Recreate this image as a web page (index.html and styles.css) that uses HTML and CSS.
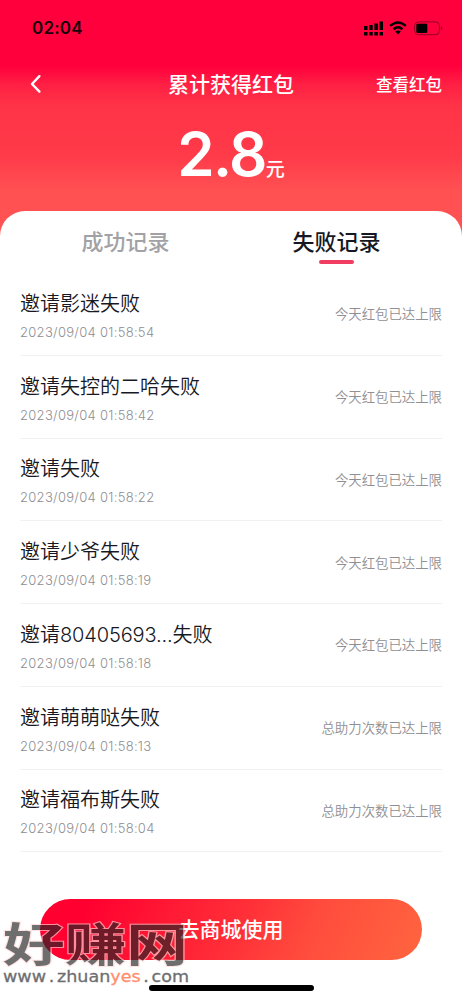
FILE: index.html
```html
<!DOCTYPE html>
<html lang="zh-CN">
<head>
<meta charset="utf-8">
<meta name="viewport" content="width=device-width, initial-scale=1">
<title>累计获得红包</title>
<link rel="stylesheet" href="styles.css">
</head>
<body>
<div class="screen">
  <header class="hero">
    <div class="status">
      <span class="clock">02:04</span>
      <div class="status-icons">
        <svg width="19" height="15" viewBox="0 0 19 15"><path d="M0 5h3.5v4H0zM5.2 4h3.5v5H5.2zM10.4 2.4h3.5V9h-3.5zM15.5.5H19V9h-3.5zM0 11h3.5v3.5H0zM5.2 11h3.5v3.5H5.2zM10.4 11h3.5v3.5h-3.5zM15.5 11H19v3.5h-3.5z"/></svg>
        <svg class="wifi" width="18" height="14" viewBox="0 0 18 14"><path d="M1.2 4.9Q9-2 16.8 4.9M4.5 8.2Q9 4.2 13.5 8.2" fill="none" stroke="#000" stroke-width="2.5"/><path d="M9 13.4 6.1 10.6Q9 8.3 11.9 10.6z"/></svg>
        <svg class="battery" width="29" height="15" viewBox="0 0 29 15"><rect x=".6" y=".9" width="24.8" height="12.8" rx="3.8" fill="none" stroke="#000" stroke-opacity=".4"/><rect x="2.3" y="2.7" width="11" height="9.2" rx="1.2"/><path d="M26.8 5.1q3 2.2 0 4.4z" fill-opacity=".45"/></svg>
      </div>
    </div>
    <nav class="nav">
      <svg class="back" width="12" height="20" viewBox="0 0 12 20"><path d="M9.4 2.2 2 10l7.4 7.7" fill="none" stroke="#fff" stroke-width="2.4" stroke-linecap="round" stroke-linejoin="round"/></svg>
      <h1 class="title">累计获得红包</h1>
      <a class="view">查看红包</a>
    </nav>
    <div class="amount"><span class="num">2.8</span><span class="unit">元</span></div>
  </header>
  <main class="sheet">
    <div class="tabs">
      <div class="tab">成功记录</div>
      <div class="tab active">失败记录</div>
    </div>
    <ul class="list">
      <li class="row"><div><p class="name">邀请影迷失败</p><p class="date">2023/09/04 01:58:54</p></div><span class="reason">今天红包已达上限</span></li>
      <li class="row"><div><p class="name">邀请失控的二哈失败</p><p class="date">2023/09/04 01:58:42</p></div><span class="reason">今天红包已达上限</span></li>
      <li class="row"><div><p class="name">邀请失败</p><p class="date">2023/09/04 01:58:22</p></div><span class="reason">今天红包已达上限</span></li>
      <li class="row"><div><p class="name">邀请少爷失败</p><p class="date">2023/09/04 01:58:19</p></div><span class="reason">今天红包已达上限</span></li>
      <li class="row"><div><p class="name">邀请<span class="digits">80405693...</span>失败</p><p class="date">2023/09/04 01:58:18</p></div><span class="reason">今天红包已达上限</span></li>
      <li class="row"><div><p class="name">邀请萌萌哒失败</p><p class="date">2023/09/04 01:58:13</p></div><span class="reason">总助力次数已达上限</span></li>
      <li class="row"><div><p class="name">邀请福布斯失败</p><p class="date">2023/09/04 01:58:04</p></div><span class="reason">总助力次数已达上限</span></li>
    </ul>
    <div class="button">去商城使用</div>
    <div class="home-bar"></div>
  </main>
  <div class="mark">
    <div class="mark-name">好赚网</div>
    <div class="mark-url"><span>www</span><span>.</span><span>zhuan<span class="hot">yes</span></span><span>.</span><span>com</span></div>
  </div>
</div>
</body>
</html>
```
FILE: styles.css
```css
* { box-sizing: border-box; margin: 0; padding: 0; }
body {
  font-family: Inter, "Noto Sans CJK SC", sans-serif;
  background: #fff;
}
.screen {
  position: relative;
  width: 462px;
  height: 1000px;
  overflow: hidden;
  background: linear-gradient(#ff003d 0, #ff003d 66px, #ff1f43 84px, #ff3347 106px, #ff3a49 155px, #ff5052 190px, #ff5353 240px);
}
.hero { height: 211px; color: #fff; }
.status {
  height: 56px;
  padding: 0 19px 0 32px;
  display: flex;
  justify-content: space-between;
  align-items: center;
}
.clock { color: #16000a; font-size: 17px; font-weight: 600; letter-spacing: .2px; }
.status-icons { display: flex; align-items: center; }
.wifi { margin-left: 6px; }
.battery { margin-left: 7px; }
.nav {
  height: 56px;
  padding: 0 20px;
  display: grid;
  grid-template-columns: 1fr auto 1fr;
  align-items: center;
}
.back { margin-left: 10px; }
.title { padding-top: 1px; font-size: 21px; line-height: 30px; font-weight: 500; }
.view { justify-self: end; font-size: 16.5px; font-weight: 500; }
.amount {
  height: 86px;
  display: flex;
  justify-content: center;
  align-items: baseline;
  line-height: 84px;
}
.num { font-size: 60px; font-weight: 560; letter-spacing: -1.6px; }
.unit { font-size: 19px; font-weight: 500; }
.sheet {
  height: 789px;
  background: #fff;
  border-radius: 25px 25px 0 0;
}
.tabs { height: 62px; display: flex; padding: 0 20px; }
.tab {
  flex: 1;
  height: 53px;
  padding-top: 15px;
  text-align: center;
  font-size: 22px;
  line-height: 32px;
  font-weight: 500;
  color: #a2a2a6;
}
.active { color: #161823; }
.active::after {
  content: "";
  display: block;
  width: 35px;
  height: 3.5px;
  margin: 2px auto 0;
  border-radius: 2px;
  background: #f03d60;
}
.list { list-style: none; padding: 0 20px; }
.row {
  height: 82.75px;
  display: flex;
  justify-content: space-between;
  align-items: center;
  border-bottom: 1px solid #f1f1f1;
}
.name { padding-top: 2px; font-size: 20px; line-height: 30px; font-weight: 350; color: #161823; }
.digits { letter-spacing: -.15px; }
.date {
  margin-top: 4px;
  font-size: 13px;
  line-height: 18px;
  font-weight: 350;
  letter-spacing: .3px;
  color: #8e8e92;
}
.reason { font-size: 13.4px; font-weight: 350; line-height: 18px; padding-top: 1px; color: #909094; }
.button {
  width: 382px;
  height: 61px;
  margin: 47px auto 0;
  padding-bottom: 4px;
  border-radius: 31px;
  display: flex;
  align-items: center;
  justify-content: center;
  background: linear-gradient(115deg, #ff0030 12%, #ff3038 52%, #ff4c3d 70%, #ff653f);
  color: #fff;
  font-size: 21px;
  font-weight: 500;
}
.home-bar {
  width: 165px;
  height: 6px;
  margin: 25px auto 0;
  border-radius: 3px;
  background: #000;
}
.mark {
  position: absolute;
  left: 3px;
  top: 917px;
  width: 187px;
  opacity: .66;
  color: #242424;
}
.mark-name {
  width: 138px;
  height: 51px;
  line-height: 54px;
  font-size: 46px;
  font-weight: 700;
  white-space: nowrap;
  transform: scaleX(1.34);
  transform-origin: left;
  -webkit-text-stroke: 2px #ffd5d5;
  paint-order: stroke fill;
}
.mark-url {
  width: 159px;
  height: 18px;
  display: flex;
  justify-content: space-between;
  font: 15px/18px "DejaVu Sans", sans-serif;
  -webkit-text-stroke: .3px;
  white-space: nowrap;
  transform: scaleX(1.17);
  transform-origin: left;
}
.hot { color: #ff5420; }
```
